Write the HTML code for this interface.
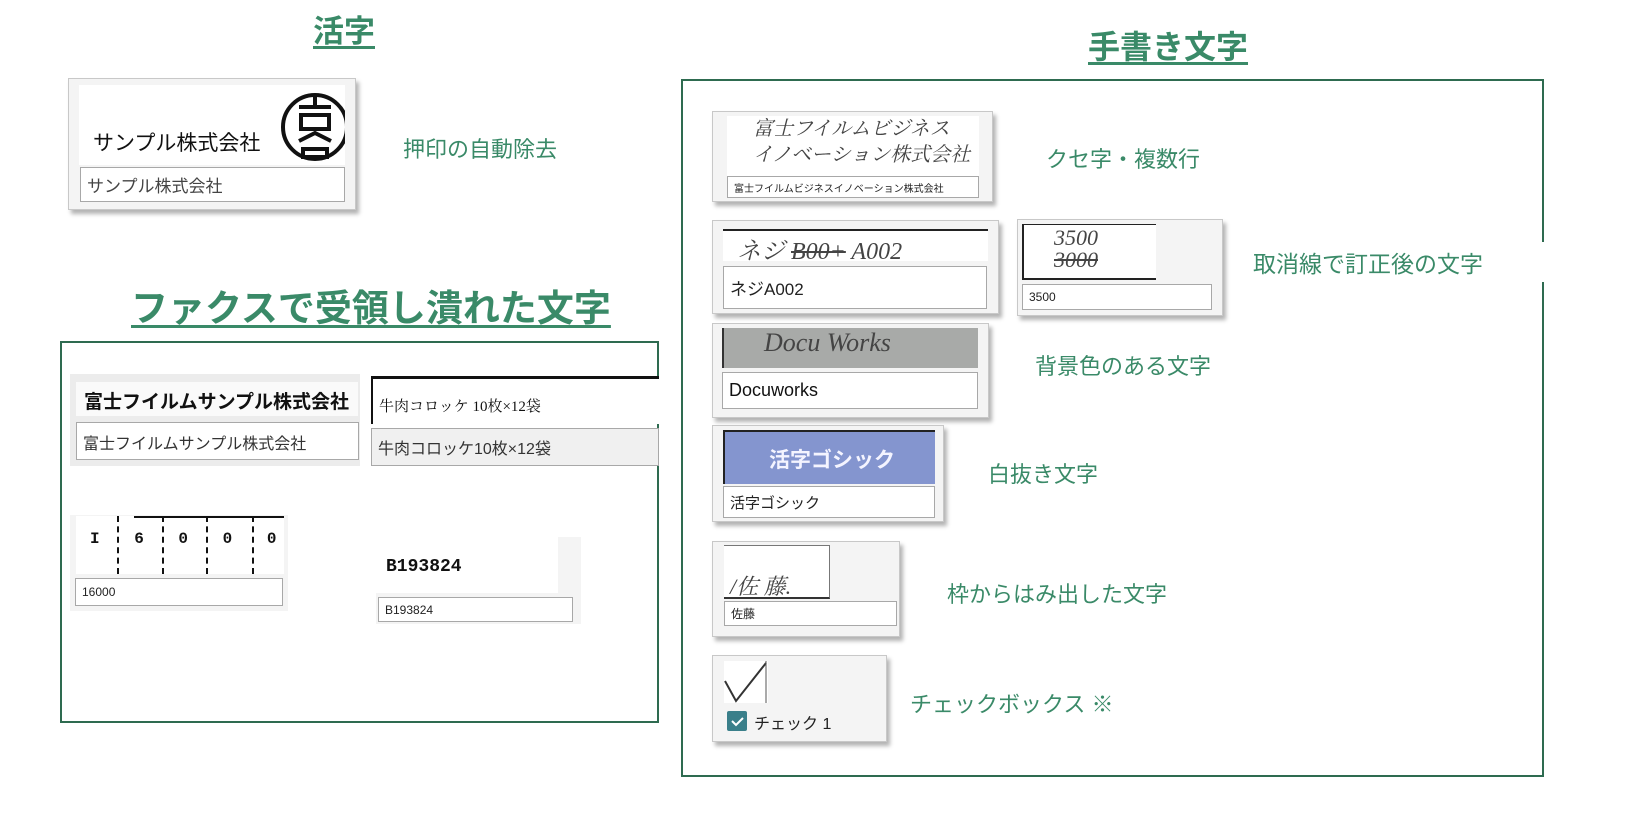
<!DOCTYPE html>
<html><head><meta charset="utf-8"><style>
*{margin:0;padding:0;box-sizing:border-box}
body{width:1630px;height:836px;background:#fff;position:relative;overflow:hidden;font-family:"Liberation Sans","Noto Sans CJK JP",sans-serif;color:#222}
.a{position:absolute}
.t{position:absolute;font-weight:bold;color:#3a8a68;text-decoration:underline;text-decoration-thickness:3px;text-underline-offset:4px;white-space:nowrap;line-height:1}
.g{position:absolute;color:#3a8a68;font-size:22px;white-space:nowrap;line-height:1}
.card{position:absolute;background:#f4f4f4;border:1px solid #c8c8c8;box-shadow:3px 4px 4px rgba(0,0,0,.3)}
.in{position:absolute;background:#fff;border:1px solid #a8a8a8;font-size:15px;padding-left:6px;display:flex;align-items:center;white-space:nowrap;overflow:hidden}
.img{position:absolute;background:#fff;overflow:hidden;white-space:nowrap}
.hw{font-family:"Liberation Serif","Noto Serif CJK SC",serif;font-style:italic;color:#444}
</style></head><body>

<div class="t" style="left:313px;top:16px;font-size:31px">活字</div>
<div class="card" style="left:68px;top:78px;width:288px;height:132px">
  <div class="img" style="left:10px;top:6px;width:266px;height:80px">
    <div class="a" style="left:14px;top:42px;font-size:21px;color:#111">サンプル株式会社</div>
    <svg class="a" style="left:198px;top:0" width="72" height="80"><circle cx="38" cy="42" r="32" fill="none" stroke="#111" stroke-width="4"/><path d="M22 22h32M38 10v14M24 30h28v14H24zM22 56l16-8 16 8M26 64h24v8H26z" fill="none" stroke="#111" stroke-width="4"/></svg>
  </div>
  <div class="in" style="left:11px;top:88px;width:265px;height:35px;font-size:17px;color:#444">サンプル株式会社</div>
</div>
<div class="g" style="left:403px;top:139px">押印の自動除去</div>

<div class="t" style="left:131px;top:290px;font-size:37px">ファクスで受領し潰れた文字</div>
<div class="a" style="left:60px;top:341px;width:599px;height:382px;border:2px solid #2e6b50"></div>
<div class="a" style="left:70px;top:374px;width:290px;height:92px;background:#ececec"></div>
<div class="img" style="left:76px;top:382px;width:282px;height:34px;background:#fafafa"><div class="a" style="left:8px;top:5px;font-size:19px;font-weight:bold;color:#111">富士フイルムサンプル株式会社</div></div>
<div class="in" style="left:76px;top:422px;width:283px;height:38px;font-size:16px;color:#333;align-items:flex-start;padding-top:7px">富士フイルムサンプル株式会社</div>
<div class="img" style="left:371px;top:376px;width:288px;height:48px;border-top:3px solid #111;border-left:2px solid #111"><div class="a" style="left:6px;top:16px;font-size:15px;color:#111;font-family:'Liberation Serif','Noto Serif CJK SC',serif">牛肉コロッケ 10枚×12袋</div></div>
<div class="in" style="left:371px;top:428px;width:288px;height:38px;background:#f0f0f0;font-size:16px;color:#333">牛肉コロッケ10枚×12袋</div>

<div class="a" style="left:70px;top:515px;width:218px;height:96px;background:#f4f4f4"></div>
<div class="img" style="left:76px;top:516px;width:208px;height:58px">
  <div class="a" style="left:58px;top:0;width:150px;height:2px;background:#111"></div>
  <div class="a" style="left:41px;top:0;height:58px;border-left:2px dashed #111"></div>
  <div class="a" style="left:86px;top:0;height:58px;border-left:2px dashed #111"></div>
  <div class="a" style="left:130px;top:0;height:58px;border-left:2px dashed #111"></div>
  <div class="a" style="left:176px;top:0;height:58px;border-left:2px dashed #111"></div>
  <div class="a" style="left:14px;top:14px;font-size:16px;font-family:'Liberation Mono',monospace;font-weight:bold;word-spacing:25px;color:#111">I 6 0 0 0</div>
</div>
<div class="in" style="left:75px;top:578px;width:208px;height:28px;font-size:12px">16000</div>

<div class="a" style="left:376px;top:537px;width:205px;height:87px;background:#f4f4f4"></div>
<div class="img" style="left:376px;top:537px;width:182px;height:56px"><div class="a" style="left:10px;top:20px;font-size:18px;font-weight:bold;color:#111;font-family:'Liberation Mono',monospace">B193824</div></div>
<div class="in" style="left:378px;top:597px;width:195px;height:25px;font-size:12px">B193824</div>

<div class="t" style="left:1088px;top:31px;font-size:32px">手書き文字</div>
<div class="a" style="left:681px;top:79px;width:863px;height:698px;border:2px solid #2e6b50"></div>

<div class="card" style="left:712px;top:111px;width:281px;height:91px">
  <div class="img hw" style="left:14px;top:4px;width:252px;height:62px;font-size:20px;line-height:26px;padding-left:26px">富士フイルムビジネス<br>イノベーション株式会社</div>
  <div class="in" style="left:14px;top:64px;width:252px;height:22px;font-size:10px">富士フイルムビジネスイノベーション株式会社</div>
</div>
<div class="g" style="left:1046px;top:149px">クセ字・複数行</div>

<div class="card" style="left:712px;top:220px;width:287px;height:94px">
  <div class="img hw" style="left:10px;top:8px;width:265px;height:32px;border-top:2px solid #222;font-size:24px;padding-left:14px">ネジ <s>B00+</s> A002</div>
  <div class="in" style="left:10px;top:45px;width:264px;height:43px;font-size:17px">ネジA002</div>
</div>
<div class="card" style="left:1017px;top:219px;width:206px;height:97px">
  <div class="img hw" style="left:4px;top:4px;width:134px;height:56px;border-left:2px solid #222;border-bottom:2px solid #222;border-top:1px solid #222;font-size:22px;line-height:22px;padding:2px 0 0 30px">3500<br><s>3000</s></div>
  <div class="in" style="left:4px;top:64px;width:190px;height:26px;font-size:12px">3500</div>
</div>
<div class="a" style="left:1245px;top:242px;width:302px;height:40px;background:#fff"></div>
<div class="g" style="left:1253px;top:253px;font-size:23px">取消線で訂正後の文字</div>

<div class="card" style="left:712px;top:323px;width:277px;height:95px">
  <div class="img hw" style="left:9px;top:4px;width:256px;height:40px;background:#a8aaa8;border-left:2px solid #333;font-size:26px;padding-left:40px;color:#444">Docu Works</div>
  <div class="in" style="left:9px;top:48px;width:256px;height:37px;font-size:18px;color:#111">Docuworks</div>
</div>
<div class="g" style="left:1035px;top:356px">背景色のある文字</div>

<div class="card" style="left:712px;top:425px;width:232px;height:97px">
  <div class="img" style="left:10px;top:4px;width:212px;height:54px;background:#8495cf;border-top:2px solid #222;border-left:2px solid #222;color:#f4f4ff;font-weight:bold;font-size:21px;padding:12px 0 0 44px">活字ゴシック</div>
  <div class="in" style="left:10px;top:60px;width:212px;height:32px;font-size:15px">活字ゴシック</div>
</div>
<div class="g" style="left:988px;top:464px">白抜き文字</div>

<div class="card" style="left:712px;top:541px;width:188px;height:96px">
  <div class="img hw" style="left:11px;top:3px;width:106px;height:54px;border-bottom:2px solid #333;border-right:1px solid #777;border-top:1px solid #777;font-size:22px;padding:24px 0 0 6px">/佐 藤.</div>
  <div class="in" style="left:11px;top:59px;width:173px;height:25px;font-size:12px">佐藤</div>
</div>
<div class="g" style="left:947px;top:584px">枠からはみ出した文字</div>

<div class="card" style="left:712px;top:655px;width:175px;height:87px">
  <div class="img" style="left:11px;top:5px;width:44px;height:42px"><svg width="44" height="42"><path d="M1 20L12 40 42 2" fill="none" stroke="#333" stroke-width="2"/><path d="M42 0v42" stroke="#555"/></svg></div>
  <div class="a" style="left:14px;top:55px;width:20px;height:20px;background:#3a7f8a;border-radius:2px"><svg width="20" height="20"><path d="M5 10l4 4 7-7" fill="none" stroke="#fff" stroke-width="2"/></svg></div>
  <div class="a" style="left:41px;top:54px;font-size:16px;color:#222">チェック 1</div>
</div>
<div class="g" style="left:910px;top:694px">チェックボックス ※</div>

</body></html>
